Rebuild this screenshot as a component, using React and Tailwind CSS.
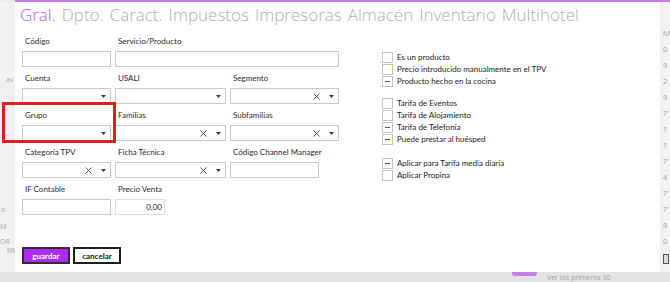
import React from 'react';

const tabs = ['Gral.', 'Dpto.', 'Caract.', 'Impuestos', 'Impresoras', 'Almacén', 'Inventario', 'Multihotel'];
const digits = ['0', '9', '2', '9', '7', '1', '1', '7', '4', '7', '7', '8', '0'];

function ClearIcon() {
  return (
    <svg width="7" height="7" viewBox="0 0 7 7" className="mr-[9px] shrink-0">
      <path d="M0.5 0.5L6.5 6.5M6.5 0.5L0.5 6.5" stroke="#555" strokeWidth="1" fill="none" />
    </svg>
  );
}

function Caret() {
  return (
    <svg width="5" height="3" viewBox="0 0 5 3" className="shrink-0">
      <path d="M0 0H5L2.5 3Z" fill="#3a3a3a" />
    </svg>
  );
}

function Field({ label, children }) {
  return (
    <div>
      <div className="mb-[5px] h-[10px] pl-[3px] font-['Lato',sans-serif] text-[8px] leading-[10px] text-[#2b2b2b] whitespace-nowrap">{label}</div>
      {children}
    </div>
  );
}

function TextBox({ className = 'w-full', value }) {
  return (
    <div className={`flex h-[16px] items-center justify-end border border-[#c9c9c9] bg-white pr-[2px] font-['Lato',sans-serif] text-[8px] text-[#222] ${className}`}>
      {value}
    </div>
  );
}

function Select({ clearable }) {
  return (
    <div className="flex h-[16px] w-full items-center justify-end border border-[#c9c9c9] bg-white pr-[4px]">
      {clearable && <ClearIcon />}
      <Caret />
    </div>
  );
}

function Check({ label, mixed }) {
  return (
    <div className="flex h-[12px] items-center gap-[4px]">
      <span className="flex h-[11px] w-[11px] items-center justify-center border border-[#c4c4c4] bg-white">
        {mixed && <span className="h-px w-[5px] bg-[#555]" />}
      </span>
      <span className="font-['Lato',sans-serif] text-[8px] leading-[10px] text-[#222] whitespace-nowrap">{label}</span>
    </div>
  );
}

export default function App() {
  return (
    <div className="relative flex h-[282px] w-[670px] flex-col overflow-hidden bg-[#ececec] font-['Open_Sans',sans-serif]">
      {/* app top bar */}
      <div className="ml-[15px] h-[2px] bg-[#c37ce9]" />

      <div className="flex h-[270px]">
        {/* background page, left */}
        <div className="flex w-[15px] flex-col bg-[#f1f1f1] text-[7px] leading-[8px] text-[#a5a5a5]">
          <span className="ml-[6px] mt-[74px]">av</span>
          <span className="ml-[1px] mt-[122px]">o</span>
          <span className="mt-[9px]">M</span>
          <span className="mt-[7px]">OR</span>
          <span className="ml-[7px] mt-[2px] h-[5px] bg-[#d0d0d0]" />
        </div>

        {/* modal */}
        <div className="flex w-[647px] flex-col bg-white">
          <div className="mt-[2px] flex gap-[6px] pl-[5px] text-[17px] font-light leading-[22px] text-[#b0b0b0]">
            {tabs.map((t, i) => (
              <span key={t} className={i === 0 ? 'text-[#b35be6]' : ''}>{t}</span>
            ))}
          </div>

          <div className="mt-[10px] flex">
            <div className="ml-[7px] w-[317px]">
              <div className="grid grid-cols-[89px_111px_109px] gap-x-[4px] gap-y-[6px]">
                <Field label="Código"><TextBox /></Field>
                <div className="col-span-2">
                  <Field label="Servicio/Producto"><TextBox /></Field>
                </div>

                <Field label="Cuenta"><Select /></Field>
                <Field label="USALI"><Select /></Field>
                <Field label="Segmento"><Select clearable /></Field>

                <Field label="Grupo"><Select /></Field>
                <Field label="Familias"><Select clearable /></Field>
                <Field label="Subfamilias"><Select clearable /></Field>

                <Field label="Categoría TPV"><Select clearable /></Field>
                <Field label="Ficha Técnica"><Select clearable /></Field>
                <Field label="Código Channel Manager"><TextBox className="w-[89px]" /></Field>

                <Field label="IF Contable"><TextBox /></Field>
                <Field label="Precio Venta"><TextBox className="w-[50px] border-[#dedede]" value="0,00" /></Field>
              </div>

              <div className="mt-[32px] flex gap-[3px]">
                <button className="h-[17px] w-[48px] border-2 border-[#2e2e2e] bg-[#b12cf2] font-['Lato',sans-serif] text-[8px] font-bold leading-none text-white">
                  guardar
                </button>
                <button className="h-[17px] w-[48px] border-2 border-[#1e1e1e] bg-white font-['Lato',sans-serif] text-[8px] font-bold leading-none text-[#222]">
                  cancelar
                </button>
              </div>
            </div>

            <div className="ml-[43px] mt-[15px] flex flex-col">
              <Check label="Es un producto" />
              <Check label="Precio introducido manualmente en el TPV" />
              <Check label="Producto hecho en la cocina" mixed />
              <div className="mt-[10px]" />
              <Check label="Tarifa de Eventos" />
              <Check label="Tarifa de Alojamiento" />
              <Check label="Tarifa de Telefonía" mixed />
              <Check label="Puede prestar al huésped" mixed />
              <div className="mt-[12px]" />
              <Check label="Aplicar para Tarifa media diaria" mixed />
              <Check label="Aplicar Propina" />
            </div>
          </div>
        </div>

        {/* background page, right */}
        <div className="flex flex-1 flex-col bg-[#f2f2f2] pl-[3px] text-[8px] leading-[16px] text-[#a8a8a8]">
          <span className="mt-[23px]">M</span>
          {digits.map((d, i) => (
            <span key={i}>{d}</span>
          ))}
          <span className="mt-[5px] h-[10px] w-[6px] border border-[#555] bg-[#ddd]" />
        </div>
      </div>

      {/* background page, bottom */}
      <div className="flex h-[10px] items-start bg-[#e3e3e3]">
        <span className="ml-[512px] h-[4px] w-[25px] rounded-b-[3px] bg-[#c77fea]" />
        <span className="ml-[10px] mt-[1px] text-[7px] leading-[9px] text-[#a0a0a0] whitespace-nowrap">Ver los primeros 30</span>
      </div>

      {/* highlight annotation */}
      <div className="pointer-events-none absolute left-[2px] top-[102px] h-[41px] w-[114px] border-[3px] border-[#e41c1c]" />
    </div>
  );
}
